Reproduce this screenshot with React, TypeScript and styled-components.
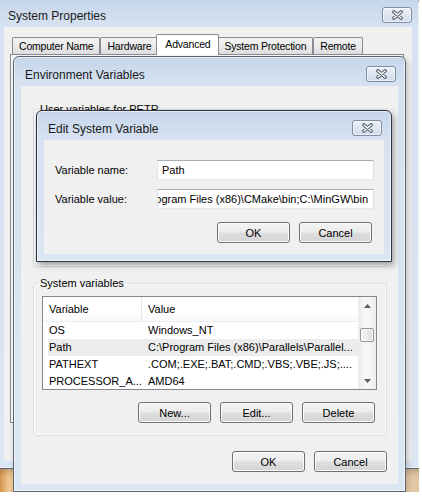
import React from "react";
import styled, { createGlobalStyle } from "styled-components";

//== Global ==//
const GlobalStyle = createGlobalStyle`
  html, body {
    margin: 0;
    padding: 0;
    background: #fff;
  }
  body {
    font-family: "Liberation Sans", Arial, sans-serif;
    font-size: 11px;
    color: #000;
  }
  * {
    box-sizing: border-box;
  }
`;

//== Desktop ==//
const Screen = styled.div`
  width: 422px;
  height: 496px;
  overflow: hidden;
  background: #fff;
`;

const Desktop = styled.div`
  position: relative;
  width: 419px;
  height: 492px;
  overflow: hidden;
  background: linear-gradient(90deg, #d4924a 0, #efc48f 8px, #f6d9b3 30px, #f2dcc0 380px, #e2c6a0 419px);
`;

//== Window chrome ==//
interface FrameProps {
  $x: number;
  $y: number;
  $w: number;
  $h: number;
  $active?: boolean;
}

const Frame = styled.div<FrameProps>`
  position: absolute;
  left: ${(p) => p.$x}px;
  top: ${(p) => p.$y}px;
  width: ${(p) => p.$w}px;
  height: ${(p) => p.$h}px;
  display: flex;
  flex-direction: column;
  padding: 0 7px 7px;
  border: 1px solid ${(p) => (p.$active ? "#2f3540" : "#5d646e")};
  border-radius: 6px 6px 0 0;
  background: linear-gradient(180deg, #c5d5e9 0, #d6e2f1 28px, #dbe6f4 100%);
  box-shadow: inset 0 0 0 1px rgba(255, 255, 255, 0.55),
    2px 3px 6px rgba(0, 0, 0, ${(p) => (p.$active ? 0.35 : 0.2)});
`;

const TitleBar = styled.div<{ $closeInset: number }>`
  height: 29px;
  flex-shrink: 0;
  display: flex;
  align-items: flex-start;
  justify-content: space-between;
  padding: 0 ${(p) => p.$closeInset}px 0 4px;
`;

const TitleText = styled.span`
  margin-top: 11px;
  font-size: 12px;
  line-height: 14px;
  color: #1a1a1a;
`;

const CloseButton = styled.button`
  margin-top: 9px;
  width: 30px;
  height: 16px;
  padding: 0;
  display: flex;
  align-items: center;
  justify-content: center;
  border: 1px solid #7d8da3;
  border-radius: 3px;
  background: linear-gradient(180deg, #eef2f8 0%, #dfe6f0 50%, #d3dcea 100%);
  box-shadow: inset 0 0 0 1px rgba(255, 255, 255, 0.6);
`;

const Client = styled.div`
  flex: 1;
  min-height: 0;
  display: flex;
  flex-direction: column;
  background: #f0f0f0;
`;

const CloseGlyph = () => (
  <svg width="13" height="10" viewBox="0 0 13 10">
    <path d="M3 2 L10 8 M10 2 L3 8" stroke="#4f5966" strokeWidth="3.6" strokeLinecap="round" fill="none" />
    <path d="M3 2 L10 8 M10 2 L3 8" stroke="#fff" strokeWidth="1.6" strokeLinecap="round" fill="none" />
  </svg>
);

interface WindowProps {
  title: string;
  x: number;
  y: number;
  w: number;
  h: number;
  active?: boolean;
  closeInset?: number;
  children?: React.ReactNode;
}

const DialogWindow: React.FC<WindowProps> = ({ title, x, y, w, h, active, closeInset = 2, children }) => (
  <Frame $x={x} $y={y} $w={w} $h={h} $active={active}>
    <TitleBar $closeInset={closeInset}>
      <TitleText>{title}</TitleText>
      <CloseButton aria-label="Close">
        <CloseGlyph />
      </CloseButton>
    </TitleBar>
    <Client>{children}</Client>
  </Frame>
);

//== Controls ==//
const PushButton = styled.button`
  width: 73px;
  height: 21px;
  padding: 0;
  font: inherit;
  font-size: 11px;
  color: #000;
  border: 1px solid #707070;
  border-radius: 3px;
  background: linear-gradient(180deg, #f4f4f4 0%, #ececec 48%, #dedede 52%, #d4d4d4 100%);
  box-shadow: inset 0 0 0 1px #fbfbfb;
`;

const ButtonRow = styled.div<{ $inset?: number }>`
  display: flex;
  justify-content: flex-end;
  gap: 9px;
  padding-right: ${(p) => p.$inset ?? 0}px;
`;

const TextBox = styled.div`
  height: 20px;
  display: flex;
  align-items: center;
  overflow: hidden;
  white-space: nowrap;
  padding: 0 5px 0 4px;
  background: #fff;
  border: 1px solid #abadb3;
  border-left-color: #e2e3ea;
  border-right-color: #dbdfe6;
  border-bottom-color: #e3e9ef;
`;

// long values stay pinned to their end, the way a scrolled edit box shows them
const ScrolledTextBox = styled(TextBox)`
  justify-content: flex-end;
`;

//== Tabs (System Properties) ==//
const TabArea = styled.div`
  flex: 1;
  display: flex;
  flex-direction: column;
  padding: 7px 8px 38px 6px;
`;

const TabStrip = styled.div`
  height: 21px;
  display: flex;
  align-items: flex-start;
  padding-left: 2px;
`;

const Tab = styled.div<{ $selected?: boolean }>`
  position: relative;
  height: ${(p) => (p.$selected ? 21 : 17)}px;
  margin: ${(p) => (p.$selected ? "0 -2px" : "3px 0 0")};
  z-index: ${(p) => (p.$selected ? 1 : 0)};
  padding: 0 ${(p) => (p.$selected ? 8 : 6)}px;
  font-size: 10.5px;
  letter-spacing: -0.2px;
  line-height: ${(p) => (p.$selected ? 18 : 16)}px;
  border: 1px solid #898c95;
  border-bottom: none;
  border-radius: 2px 2px 0 0;
  background: ${(p) => (p.$selected ? "#fff" : "linear-gradient(180deg, #f3f3f3 0%, #ebebeb 50%, #dedede 100%)")};
`;

const TabPanel = styled.div`
  flex: 1;
  margin-top: -1px;
  border: 1px solid #898c95;
  background: #fcfcfc;
`;

//== Group boxes and list ==//
const EnvBody = styled.div`
  flex: 1;
  display: flex;
  flex-direction: column;
  padding: 16px 11px 0 12px;
`;

const GroupBox = styled.fieldset<{ $gap?: number }>`
  margin: ${(p) => p.$gap ?? 0}px 0 0;
  padding: 0;
  min-width: 0;
  border: 1px solid #d5dfe5;
  border-radius: 3px;
  box-shadow: inset 0 0 0 1px #fbfcfd;
`;

const GroupLegend = styled.legend`
  margin-left: 4px;
  padding: 0 2px;
  font-size: 11px;
  line-height: 14px;
`;

const GroupBody = styled.div`
  display: flex;
  flex-direction: column;
  gap: 12px;
  padding: 6px 9px 12px 8px;
`;

const ListBox = styled.div<{ $height: number }>`
  height: ${(p) => p.$height}px;
  display: flex;
  overflow: hidden;
  background: #fff;
  border: 1px solid #828790;
`;

const ListMain = styled.div`
  flex: 1;
  min-width: 0;
  display: flex;
  flex-direction: column;
`;

const ListHeader = styled.div`
  height: 25px;
  flex-shrink: 0;
  display: grid;
  grid-template-columns: 99px 1fr;
  border-bottom: 1px solid #eceef1;
  background: linear-gradient(180deg, #fff 0%, #fff 60%, #f8f9fa 100%);
`;

const HeaderCell = styled.div`
  padding-left: 6px;
  line-height: 24px;
  border-right: 1px solid #e5e5e5;
  &:last-child {
    border-right: none;
  }
`;

const ListRow = styled.div<{ $selected?: boolean }>`
  height: 17px;
  flex-shrink: 0;
  margin-left: 5px;
  display: grid;
  grid-template-columns: 99px 1fr;
  line-height: 17px;
  background: ${(p) => (p.$selected ? "#ececec" : "transparent")};
`;

const ListCell = styled.div`
  padding: 0 6px 0 1px;
  overflow: hidden;
  white-space: nowrap;
`;

const ScrollBar = styled.div`
  width: 18px;
  flex-shrink: 0;
  display: flex;
  flex-direction: column;
  background: linear-gradient(90deg, #eaeaea 0%, #f6f6f6 35%, #f6f6f6 65%, #ececec 100%);
`;

const ScrollArrow = styled.div`
  height: 17px;
  display: flex;
  align-items: center;
  justify-content: center;
`;

const ScrollThumb = styled.div`
  height: 14px;
  margin: 14px 2px 0;
  border: 1px solid #979797;
  border-radius: 2px;
  background: linear-gradient(90deg, #f4f4f4 0%, #eaeaea 50%, #dadada 100%);
  box-shadow: inset 0 0 0 1px #fafafa;
`;

const ScrollFill = styled.div`
  flex: 1;
`;

const ArrowGlyph: React.FC<{ down?: boolean }> = ({ down }) => (
  <svg width="7" height="4" viewBox="0 0 7 4">
    <path d={down ? "M0 0 H7 L3.5 4 Z" : "M0 4 H7 L3.5 0 Z"} fill="#5b5b5b" />
  </svg>
);

interface EnvVar {
  name: string;
  value: string;
  selected?: boolean;
}

const VariableList: React.FC<{ rows: EnvVar[]; height: number }> = ({ rows, height }) => (
  <ListBox $height={height}>
    <ListMain>
      <ListHeader>
        <HeaderCell>Variable</HeaderCell>
        <HeaderCell>Value</HeaderCell>
      </ListHeader>
      {rows.map((row) => (
        <ListRow key={row.name} $selected={row.selected}>
          <ListCell>{row.name}</ListCell>
          <ListCell>{row.value}</ListCell>
        </ListRow>
      ))}
    </ListMain>
    <ScrollBar>
      <ScrollArrow>
        <ArrowGlyph />
      </ScrollArrow>
      <ScrollThumb />
      <ScrollFill />
      <ScrollArrow>
        <ArrowGlyph down />
      </ScrollArrow>
    </ScrollBar>
  </ListBox>
);

//== Edit dialog ==//
const EditForm = styled.div`
  display: grid;
  grid-template-columns: 102px 217px;
  row-gap: 9px;
  align-items: center;
  padding: 20px 0 0 11px;
`;

const FieldLabel = styled.label`
  line-height: 14px;
`;

const EditButtons = styled(ButtonRow)`
  margin-top: 13px;
`;

const EnvFooter = styled(ButtonRow)`
  margin-top: 15px;
`;

//== Data ==//
const systemVars: EnvVar[] = [
  { name: "OS", value: "Windows_NT" },
  { name: "Path", value: "C:\\Program Files (x86)\\Parallels\\Parallel...", selected: true },
  { name: "PATHEXT", value: ".COM;.EXE;.BAT;.CMD;.VBS;.VBE;.JS;...." },
  { name: "PROCESSOR_A...", value: "AMD64" },
];

const tabs = ["Computer Name", "Hardware", "Advanced", "System Protection", "Remote"];

//== Component ==//
const App: React.FC = () => (
  <Screen>
    <GlobalStyle />
    <Desktop>
      <DialogWindow title="System Properties" x={-4} y={-3} w={424} h={472} closeInset={0}>
        <TabArea>
          <TabStrip>
            {tabs.map((t) => (
              <Tab key={t} $selected={t === "Advanced"}>
                {t}
              </Tab>
            ))}
          </TabStrip>
          <TabPanel />
        </TabArea>
      </DialogWindow>

      <DialogWindow title="Environment Variables" x={13} y={56} w={393} h={436}>
        <EnvBody>
          <GroupBox>
            <GroupLegend>User variables for PETR</GroupLegend>
            <GroupBody>
              <ListBox $height={99} />
              <ButtonRow $inset={2}>
                <PushButton>New...</PushButton>
                <PushButton>Edit...</PushButton>
                <PushButton>Delete</PushButton>
              </ButtonRow>
            </GroupBody>
          </GroupBox>

          <GroupBox $gap={9}>
            <GroupLegend>System variables</GroupLegend>
            <GroupBody>
              <VariableList rows={systemVars} height={94} />
              <ButtonRow $inset={2}>
                <PushButton>New...</PushButton>
                <PushButton>Edit...</PushButton>
                <PushButton>Delete</PushButton>
              </ButtonRow>
            </GroupBody>
          </GroupBox>

          <EnvFooter>
            <PushButton>OK</PushButton>
            <PushButton>Cancel</PushButton>
          </EnvFooter>
        </EnvBody>
      </DialogWindow>

      <DialogWindow title="Edit System Variable" x={36} y={110} w={356} h={152} active>
        <EditForm>
          <FieldLabel>Variable name:</FieldLabel>
          <TextBox>Path</TextBox>
          <FieldLabel>Variable value:</FieldLabel>
          <ScrolledTextBox>C:\Program Files (x86)\CMake\bin;C:\MinGW\bin</ScrolledTextBox>
        </EditForm>
        <EditButtons $inset={12}>
          <PushButton>OK</PushButton>
          <PushButton>Cancel</PushButton>
        </EditButtons>
      </DialogWindow>
    </Desktop>
  </Screen>
);

export default App;
